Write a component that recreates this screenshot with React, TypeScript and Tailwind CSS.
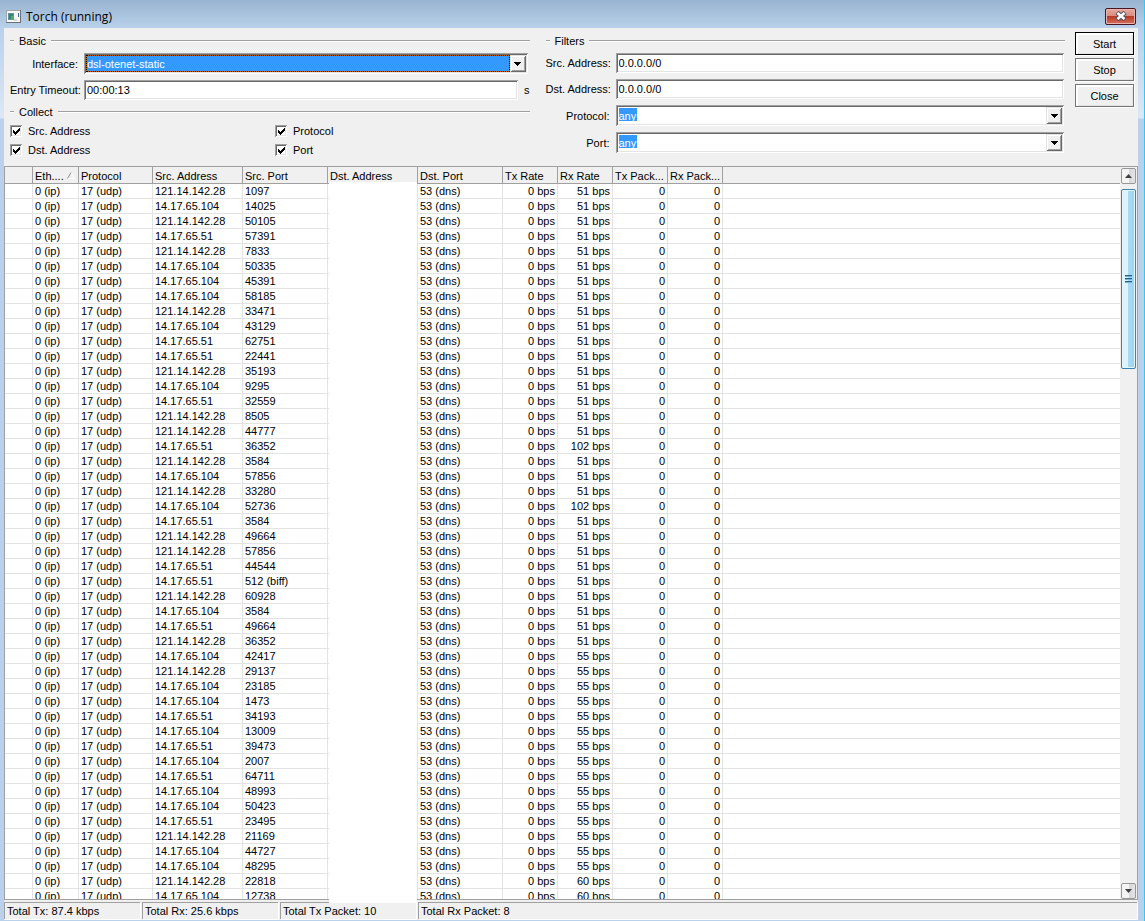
import type { ReactNode } from "react";

type TorchEntry = {
  src: string;
  port: string;
  rx: string;
};

const A = "121.14.142.28";
const B = "14.17.65.104";
const C = "14.17.65.51";

const toEntry =
  (rx: string) =>
  ([src, port]: string[]): TorchEntry => ({ src, port, rx });

const entries: TorchEntry[] = [
  ...[
    [A, "1097"],
    [B, "14025"],
    [A, "50105"],
    [C, "57391"],
    [A, "7833"],
    [B, "50335"],
    [B, "45391"],
    [B, "58185"],
    [A, "33471"],
    [B, "43129"],
    [C, "62751"],
    [C, "22441"],
    [A, "35193"],
    [B, "9295"],
    [C, "32559"],
    [A, "8505"],
    [A, "44777"],
  ].map(toEntry("51 bps")),
  { src: C, port: "36352", rx: "102 bps" },
  ...[
    [A, "3584"],
    [B, "57856"],
    [A, "33280"],
  ].map(toEntry("51 bps")),
  { src: B, port: "52736", rx: "102 bps" },
  ...[
    [C, "3584"],
    [A, "49664"],
    [A, "57856"],
    [C, "44544"],
    [C, "512 (biff)"],
    [A, "60928"],
    [B, "3584"],
    [C, "49664"],
    [A, "36352"],
  ].map(toEntry("51 bps")),
  ...[
    [B, "42417"],
    [A, "29137"],
    [B, "23185"],
    [B, "1473"],
    [C, "34193"],
    [B, "13009"],
    [C, "39473"],
    [B, "2007"],
    [C, "64711"],
    [B, "48993"],
    [B, "50423"],
    [C, "23495"],
    [A, "21169"],
    [B, "44727"],
    [B, "48295"],
  ].map(toEntry("55 bps")),
  ...[
    [A, "22818"],
    [B, "12738"],
  ].map(toEntry("60 bps")),
];

const sunken =
  "p-0.5 shadow-[inset_1px_1px_#a0a0a0,inset_-1px_-1px_#fff,inset_2px_2px_#696969,inset_-2px_-2px_#e3e3e3]";

function GroupTitle({ children }: { children: ReactNode }) {
  return (
    <div className="flex h-[18px] items-center">
      <span className="h-0.5 w-1 border-t border-[#a0a0a0] bg-white" />
      <h2 className="px-[5px]">{children}</h2>
      <span className="h-0.5 flex-1 border-t border-[#a0a0a0] bg-white" />
    </div>
  );
}

function DropArrow() {
  return (
    <span
      aria-hidden
      className="pointer-events-none absolute inset-y-0.5 right-0.5 flex w-4 items-center justify-center bg-[#f0f0f0] shadow-[inset_1px_1px_#e3e3e3,inset_-1px_-1px_#696969,inset_2px_2px_#fff,inset_-2px_-2px_#a0a0a0]"
    >
      <svg width="7" height="4" viewBox="0 0 7 4" shapeRendering="crispEdges">
        <path d="M0 0h7v1H6v1H5v1H4v1H3V3H2V2H1V1H0z" />
      </svg>
    </span>
  );
}

function TextField({
  id,
  label,
  labelWidth,
  value,
  suffix,
}: {
  id: string;
  label: string;
  labelWidth: string;
  value: string;
  suffix?: string;
}) {
  return (
    <div className="flex h-5 items-center">
      <label htmlFor={id} className={`${labelWidth} shrink-0 text-right whitespace-nowrap`}>
        {label}
      </label>
      <div className={`ml-1.5 flex h-full min-w-0 flex-1 bg-white ${sunken}`}>
        <input id={id} defaultValue={value} className="w-full min-w-0 px-px outline-none" />
      </div>
      {suffix && <span className="w-3 text-right">{suffix}</span>}
    </div>
  );
}

function FilterSelect({ id, label }: { id: string; label: string }) {
  return (
    <div className="flex h-[21px] items-center">
      <label htmlFor={id} className="w-16 shrink-0 text-right">
        {label}
      </label>
      <div className={`relative ml-1.5 flex h-full min-w-0 flex-1 bg-white ${sunken}`}>
        <select
          id={id}
          className="w-full appearance-none bg-[linear-gradient(#3399ff,#3399ff)] bg-[length:18px_13px] bg-[position:1px_1px] bg-no-repeat px-px text-white outline-none"
        >
          <option>any</option>
        </select>
        <DropArrow />
      </div>
    </div>
  );
}

function CollectOption({ label }: { label: string }) {
  return (
    <label className="flex h-[19px] items-center">
      <span className={`relative flex size-3 bg-white ${sunken}`}>
        <input type="checkbox" defaultChecked className="peer size-full appearance-none outline-none" />
        <svg
          className="pointer-events-none absolute top-[3px] left-[3px] hidden peer-checked:block"
          width="7"
          height="7"
          viewBox="0 0 7 7"
          shapeRendering="crispEdges"
        >
          <path d="M0 2h1v1h1v1h1V3h1V2h1V1h1V0h1v3H6v1H5v1H4v1H3v1H2V6H1V5H0z" />
        </svg>
      </span>
      <span className="ml-1.5">{label}</span>
    </label>
  );
}

function SideButton({ label, isDefault }: { label: string; isDefault?: boolean }) {
  return (
    <button
      type="button"
      className={`h-[23px] w-full border bg-[#f0f0f0] pt-px shadow-[inset_1px_1px_#fff,inset_2px_2px_#fff,inset_-1px_-1px_#e3e3e3,1px_1px_#fff] ${
        isDefault ? "border-black" : "border-[#767676]"
      }`}
    >
      {label}
    </button>
  );
}

function TitleBar() {
  return (
    <header className="flex h-7 shrink-0 items-center justify-between bg-linear-to-b from-[#99b4d1] to-[#b9d1ea] pr-2 pl-1.5">
      <div className="flex items-center gap-[5px] pt-[5px]">
        <svg width="15" height="13" viewBox="0 0 15 13" shapeRendering="crispEdges">
          <path fill="#a3a7ab" d="M0 0h15v13H0z" />
          <path fill="#6e7073" d="M14 0h1v13H0v-1h14z" />
          <path fill="#f6f6f6" d="M1 1h13v11H1z" />
          <path fill="#5d93a0" d="M2 3h6v7H2z" />
          <path fill="#3f8272" d="M3 4h4v5H3z" />
          <path fill="#58a874" d="M5 6h3v4H5z" />
          <path fill="#d5d5d5" d="M8 9h3v2H8z" />
          <path fill="#2f6f9c" d="M12 3h1v4h-1z" />
        </svg>
        <h1 className="font-['Open_Sans',sans-serif] text-[12px] leading-4">Torch (running)</h1>
      </div>
      <button
        type="button"
        aria-label="Close window"
        className="mt-1 flex h-[17px] w-[31px] items-center justify-center rounded-[2px] border border-[#4a1420] bg-[linear-gradient(#e5a9a0_0%,#d98a7e_48%,#b93a24_50%,#d4705c_100%)] shadow-[inset_0_0_0_1px_#e9b5ac]"
      >
        <svg width="12" height="10" viewBox="0 0 12 10">
          <path d="M2 1.5 10 8.5M10 1.5 2 8.5" stroke="#4c5566" strokeWidth="4.5" />
          <path d="M2.5 2 9.5 8M9.5 2 2.5 8" stroke="#fff" strokeWidth="2.5" />
        </svg>
      </button>
    </header>
  );
}

function SettingsPanel() {
  return (
    <form className="flex shrink-0 pt-1 pr-1 pb-[7px] pl-1.5">
      <div className="min-w-0 flex-1">
        <GroupTitle>Basic</GroupTitle>
        <div className="mt-[3px] flex flex-col gap-1.5">
          <div className="flex h-[21px] items-center pr-0.5">
            <label htmlFor="interface" className="w-[68px] shrink-0 text-right">
              Interface:
            </label>
            <div className={`relative ml-1.5 flex h-full min-w-0 flex-1 bg-white ${sunken}`}>
              <div className="mr-4 flex min-w-0 flex-1 bg-[#cc6600]">
                <select
                  id="interface"
                  className="w-full appearance-none border border-dotted border-black bg-[#3399ff] bg-clip-padding text-white outline-none"
                >
                  <option>dsl-otenet-static</option>
                </select>
              </div>
              <DropArrow />
            </div>
          </div>
          <TextField
            id="timeout"
            label="Entry Timeout:"
            labelWidth="w-[68px]"
            value="00:00:13"
            suffix="s"
          />
        </div>
        <div className="mt-[3px]">
          <GroupTitle>Collect</GroupTitle>
          <div className="grid grid-cols-[265px_1fr]">
            <CollectOption label="Src. Address" />
            <CollectOption label="Protocol" />
            <CollectOption label="Dst. Address" />
            <CollectOption label="Port" />
          </div>
        </div>
      </div>
      <div className="ml-4 min-w-0 flex-1">
        <GroupTitle>Filters</GroupTitle>
        <div className="mt-[3px] flex flex-col gap-1.5 pr-px">
          <TextField id="src-address" label="Src. Address:" labelWidth="w-16" value="0.0.0.0/0" />
          <TextField id="dst-address" label="Dst. Address:" labelWidth="w-16" value="0.0.0.0/0" />
          <FilterSelect id="protocol" label="Protocol:" />
          <FilterSelect id="port" label="Port:" />
        </div>
      </div>
      <div className="ml-2.5 flex w-[59px] flex-col gap-[3px]">
        <SideButton label="Start" isDefault />
        <SideButton label="Stop" />
        <SideButton label="Close" />
      </div>
    </form>
  );
}

const headCell =
  "h-[17px] overflow-hidden border-r border-b border-[#a0a0a0] bg-[#f0f0f0] pt-px pl-0.5 text-left font-normal whitespace-nowrap";
const cell = "h-[15px] border-r border-b border-[#e3e3e3] pl-0.5 whitespace-nowrap";
const numCell = "h-[15px] border-r border-b border-[#e3e3e3] pr-0.5 text-right whitespace-nowrap";

function ConnectionTable() {
  return (
    <table className="w-full table-fixed border-separate border-spacing-0 leading-[14px]">
      <colgroup>
        <col className="w-7" />
        <col className="w-[46px]" />
        <col className="w-[74px]" />
        <col className="w-[90px]" />
        <col className="w-[85px]" />
        <col className="w-[90px]" />
        <col className="w-[85px]" />
        <col className="w-[55px]" />
        <col className="w-[55px]" />
        <col className="w-[55px]" />
        <col className="w-[55px]" />
        <col />
      </colgroup>
      <thead>
        <tr>
          <th className={headCell} />
          <th className={headCell}>
            <span className="flex items-center justify-between pr-[3px]">
              Eth....
              <svg width="8" height="7" viewBox="0 0 8 7" fill="none">
                <path d="M4 .5l3.5 6H.5" stroke="#fff" />
                <path d="M.5 6.5 4 .5" stroke="#8c8c8c" />
              </svg>
            </span>
          </th>
          <th className={headCell}>Protocol</th>
          <th className={headCell}>Src. Address</th>
          <th className={headCell}>Src. Port</th>
          <th className={headCell}>Dst. Address</th>
          <th className={headCell}>Dst. Port</th>
          <th className={headCell}>Tx Rate</th>
          <th className={headCell}>Rx Rate</th>
          <th className={headCell}>Tx Pack...</th>
          <th className={headCell}>Rx Pack...</th>
          <th className="border-b border-[#a0a0a0] bg-[#f0f0f0]" />
        </tr>
      </thead>
      <tbody>
        {entries.map((entry, index) => (
          <tr key={index}>
            <td className={cell} />
            <td className={cell}>0 (ip)</td>
            <td className={cell}>17 (udp)</td>
            <td className={cell}>{entry.src}</td>
            <td className={cell}>{entry.port}</td>
            <td className={cell} />
            <td className={cell}>53 (dns)</td>
            <td className={numCell}>0 bps</td>
            <td className={numCell}>{entry.rx}</td>
            <td className={numCell}>0</td>
            <td className={numCell}>0</td>
            <td className="border-b border-[#e3e3e3]" />
          </tr>
        ))}
      </tbody>
    </table>
  );
}

const scrollButton =
  "flex h-4 w-full shrink-0 items-center justify-center rounded-[2px] border border-[#979797] bg-[linear-gradient(to_right,#f4f4f4_50%,#d4d6d8_50%,#e4e4e6)]";

function ScrollBar() {
  return (
    <div className="flex w-[17px] shrink-0 flex-col bg-[#f0f0f0] pt-px pr-px pl-px">
      <button type="button" aria-label="Scroll up" className={scrollButton}>
        <svg width="7" height="4" viewBox="0 0 7 4">
          <path fill="#404040" d="M0 4 3.5 0 7 4z" />
        </svg>
      </button>
      <div className="min-h-0 flex-1 pt-[5px]">
        <div className="flex h-[180px] flex-col items-center justify-center gap-px rounded-[2px] border border-[#3c7fb1] bg-[linear-gradient(to_right,#dff3fc_45%,#a8daf4_50%,#9ad3f3)] shadow-[inset_0_0_0_1px_#e6f6fd]">
          <span className="h-0.5 w-[7px] border-t border-[#26617f] bg-[#6fb4d6]" />
          <span className="h-0.5 w-[7px] border-t border-[#26617f] bg-[#6fb4d6]" />
          <span className="h-0.5 w-[7px] border-t border-[#26617f] bg-[#6fb4d6]" />
        </div>
      </div>
      <button type="button" aria-label="Scroll down" className={scrollButton}>
        <svg width="7" height="4" viewBox="0 0 7 4">
          <path fill="#404040" d="M0 0h7L3.5 4z" />
        </svg>
      </button>
    </div>
  );
}

const statusCell =
  "h-[17px] border-t border-l border-[#a0a0a0] pl-0.5 leading-4 whitespace-nowrap shadow-[1px_1px_#fff]";

function StatusBar() {
  return (
    <footer className="flex shrink-0 gap-0.5 pt-0.5 pr-px pb-px">
      <p className={`w-[136px] ${statusCell}`}>Total Tx: 87.4 kbps</p>
      <p className={`w-[136px] ${statusCell}`}>Total Rx: 25.6 kbps</p>
      <p className={`w-[136px] ${statusCell}`}>Total Tx Packet: 10</p>
      <p className={`flex-1 ${statusCell}`}>Total Rx Packet: 8</p>
    </footer>
  );
}

export default function App() {
  return (
    <div className="flex h-screen flex-col overflow-hidden border-r border-[#35c8ee] bg-[#b9d1ea] font-['Liberation_Sans',Arial,sans-serif] text-[11px] leading-4 text-black">
      <TitleBar />
      <div className="flex min-h-0 flex-1 bg-[linear-gradient(#b9d1ea,#dce8f5_90px,#b9d1ea_91px)] pr-1.5 pb-px pl-1">
        <main className="flex min-w-0 flex-1 flex-col bg-[#f0f0f0]">
          <SettingsPanel />
          <section className="relative flex min-h-0 flex-1 border border-[#a0a0a0] bg-white">
            <div className="min-w-0 flex-1 overflow-hidden">
              <ConnectionTable />
            </div>
            <ScrollBar />
            {/* blanks out the destination addresses */}
            <div className="absolute top-[15px] -bottom-1 left-[324px] w-[88px] bg-white" />
          </section>
          <StatusBar />
        </main>
      </div>
    </div>
  );
}
